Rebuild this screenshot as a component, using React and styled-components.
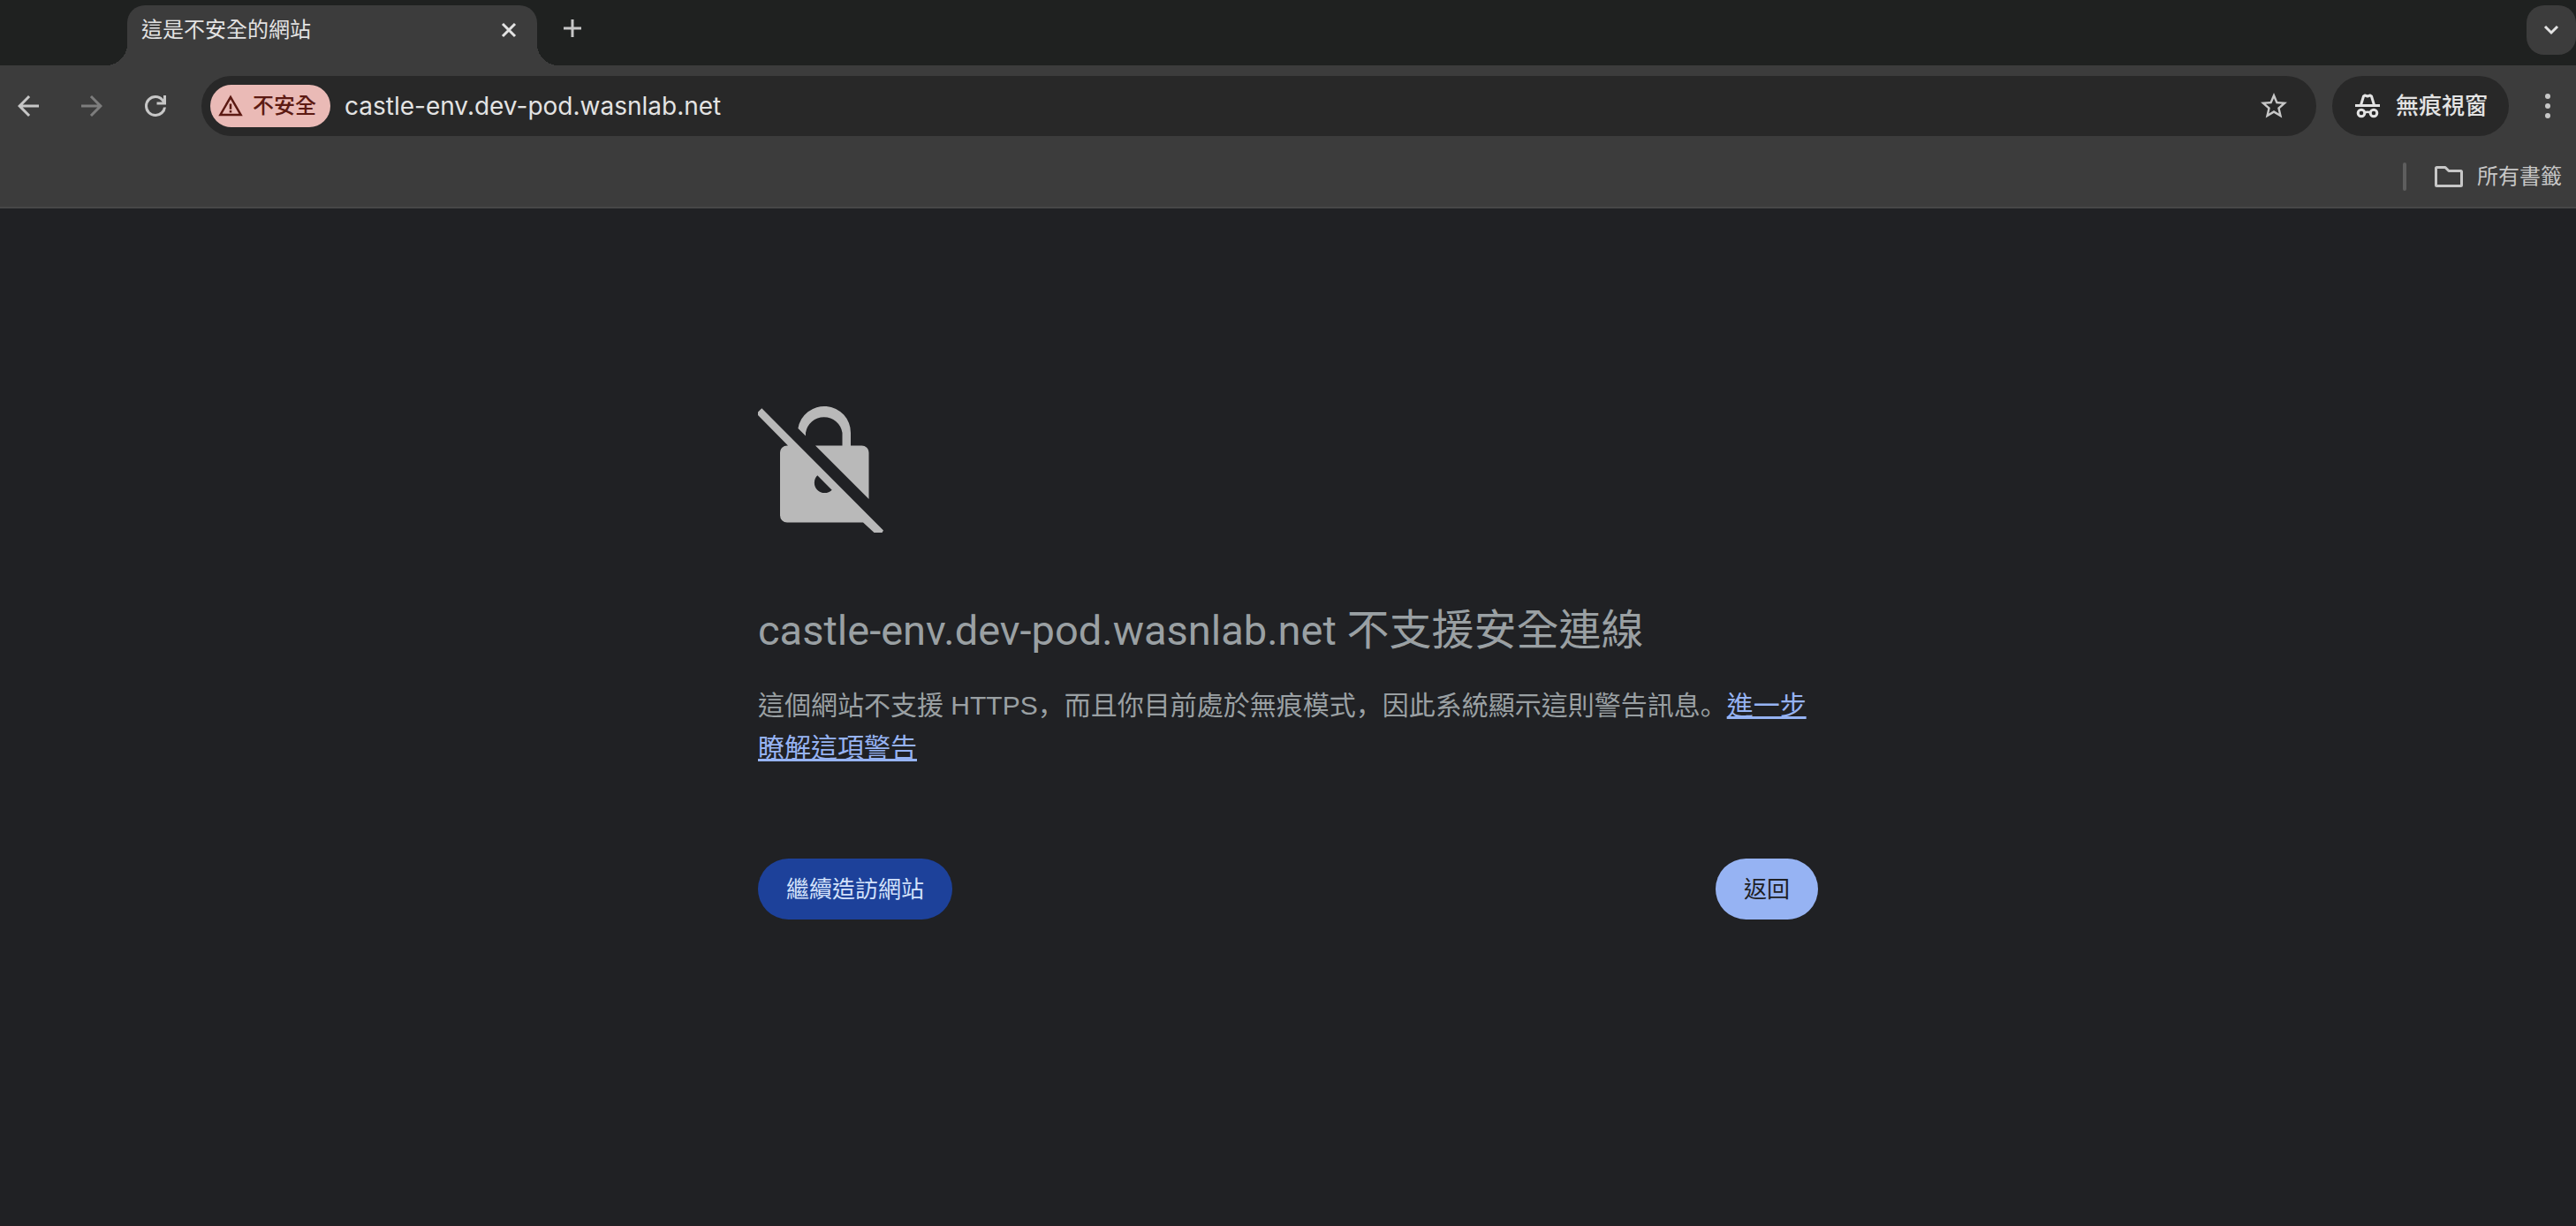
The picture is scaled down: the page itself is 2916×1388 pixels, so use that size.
import React from "react";
import styled, { createGlobalStyle, css } from "styled-components";

const sans = `Inter, "Noto Sans CJK TC", sans-serif`;

const GlobalStyle = createGlobalStyle`
  *, *::before, *::after { box-sizing: border-box; }
  body {
    margin: 0;
    background: #202124;
    font-family: ${sans};
  }
  button, input { font: inherit; }
`;

const Window = styled.div`
  display: flex;
  flex-direction: column;
  min-height: 100vh;
  border-bottom: 1px solid #241f24;
`;

/* ---------- tab strip ---------- */

const TabStrip = styled.header`
  display: flex;
  align-items: flex-end;
  height: 74px;
  padding-left: 144px;
  background: #1f2120;
`;

const Tab = styled.div`
  position: relative;
  display: flex;
  align-items: center;
  justify-content: space-between;
  width: 464px;
  height: 68px;
  padding: 0 14px 12px 16px;
  border-radius: 20px 20px 0 0;
  background: #3c3c3c;
  color: #e3e3e3;

  &::before,
  &::after {
    content: "";
    position: absolute;
    bottom: 0;
    width: 24px;
    height: 24px;
  }
  &::before {
    right: 100%;
    background: radial-gradient(circle at 0 0, transparent 24px, #3c3c3c 24px);
  }
  &::after {
    left: 100%;
    background: radial-gradient(circle at 100% 0, transparent 24px, #3c3c3c 24px);
  }
`;

const TabTitle = styled.span`
  font-size: 24px;
  line-height: 36px;
`;

const IconButton = styled.button`
  display: flex;
  align-items: center;
  justify-content: center;
  flex: none;
  width: 36px;
  height: 36px;
  padding: 0;
  border: 0;
  background: none;
  color: ${(p) => p.$color || "#c7c7c7"};

  svg { display: block; }
`;

const NewTab = styled(IconButton)`
  align-self: center;
  margin: 0 auto 10px 22px;
`;

const TabSearch = styled(IconButton)`
  align-self: flex-start;
  width: 56px;
  height: 56px;
  margin-top: 6px;
  border-radius: 20px;
  background: #3c3c3c;
`;

/* ---------- toolbar ---------- */

const Chrome = styled.div`
  border-bottom: 2px solid #474747;
  background: #3c3c3c;
`;

const Toolbar = styled.nav`
  display: flex;
  align-items: center;
  padding: 12px 14px;
`;

const NavButtons = styled.div`
  display: flex;
  gap: 36px;
  margin-right: 34px;
`;

const Omnibox = styled.form`
  display: flex;
  flex: 1;
  align-items: center;
  height: 68px;
  padding: 0 30px 0 10px;
  border-radius: 34px;
  background: #282828;
`;

const SecurityChip = styled.button`
  display: flex;
  align-items: center;
  gap: 10px;
  height: 48px;
  padding: 0 16px 0 8px;
  border: 0;
  border-radius: 24px;
  background: #eabab6;
  color: #5c1a13;
  font-size: 24px;
  font-weight: 500;
  line-height: 36px;
`;

const Address = styled.input`
  flex: 1;
  min-width: 0;
  padding: 0 16px;
  border: 0;
  outline: 0;
  background: none;
  color: #e3e3e3;
  font-size: 28px;
  line-height: 36px;
`;

const Incognito = styled.button`
  display: flex;
  align-items: center;
  gap: 18px;
  height: 68px;
  margin: 0 26px 0 18px;
  padding: 0 24px 0 26px;
  border: 0;
  border-radius: 34px;
  background: #282828;
  color: #e3e3e3;
  font-size: 26px;
  font-weight: 500;
  line-height: 36px;
`;

const BookmarksBar = styled.div`
  display: flex;
  align-items: center;
  justify-content: flex-end;
  height: 68px;
  padding-right: 16px;
`;

const Divider = styled.span`
  width: 4px;
  height: 32px;
  margin-right: 32px;
  border-radius: 2px;
  background: #5e5e5e;
`;

const AllBookmarks = styled.button`
  display: flex;
  align-items: center;
  gap: 16px;
  padding: 0;
  border: 0;
  background: none;
  color: #c7c7c7;
  font-size: 24px;
  line-height: 36px;
`;

/* ---------- warning page ---------- */

const Page = styled.main`
  width: 100%;
  max-width: 1200px;
  margin: 0 auto;
  padding-top: 223px;
  color: #9aa0a3;

  > svg { display: block; }
`;

const Title = styled.h1`
  margin: 73px 0 20px;
  font-family: Roboto, "Noto Sans CJK TC", sans-serif;
  font-size: 48px;
  font-weight: 400;
  line-height: 76px;
`;

const Host = styled.span`
  font-size: 47px;
`;

const Message = styled.p`
  margin: 0;
  font-family: "Liberation Sans", "Noto Sans CJK TC", sans-serif;
  font-size: 30px;
  line-height: 48px;
`;

const Punctuation = styled.span`
  font-family: "Noto Sans CJK SC", sans-serif;
`;

const LearnMore = styled.a`
  color: #96b3f3;
  text-decoration: underline;
`;

const Actions = styled.div`
  display: flex;
  justify-content: space-between;
  margin-top: 101px;
`;

const ActionButton = styled.button`
  height: 69px;
  padding: 0 32px;
  border: 0;
  border-radius: 35px;
  font-size: 26px;
  line-height: 36px;
  ${(p) =>
    p.$primary
      ? css`
          background: #96b3f3;
          color: #202124;
        `
      : css`
          background: #1d419a;
          color: #d3e2fb;
        `}
`;

/* ---------- icons ---------- */

const Glyph = ({ size = 36, d }) => (
  <svg width={size} height={size} viewBox="0 0 24 24" fill="currentColor" aria-hidden="true">
    <path d={d} />
  </svg>
);

const paths = {
  back: "M20 11H7.83l5.59-5.59L12 4l-8 8 8 8 1.41-1.41L7.83 13H20v-2z",
  forward: "M12 4l-1.41 1.41L16.17 11H4v2h12.17l-5.58 5.59L12 20l8-8z",
  reload:
    "M12 20q-3.35 0-5.675-2.325T4 12t2.325-5.675T12 4q1.725 0 3.3.712T18 6.75V4h2v7h-7V9h4.2q-.8-1.4-2.187-2.2T12 6Q9.5 6 7.75 7.75T6 12t1.75 4.25T12 18q2.400 0 4.100-1.600T18 13h2q-.3 2.900-2.600 5T12 20",
  star:
    "M22 9.24l-7.19-.62L12 2 9.19 8.63 2 9.24l5.46 4.73L5.82 21 12 17.27 18.18 21l-1.63-7.03L22 9.24zM12 15.4l-3.76 2.27 1-4.28-3.32-2.88 4.38-.38L12 6.1l1.71 4.04 4.38.38-3.32 2.88 1 4.28L12 15.4z",
  warning:
    "M1 21 12 2l11 19H1zm3.45-2h15.1L12 6 4.45 19zM11 18h2v-2h-2v2zm0-3h2v-5h-2v5z",
};

const Close = () => (
  <svg width="18" height="18" viewBox="0 0 18 18" fill="none" stroke="currentColor" strokeWidth="3">
    <path d="M2 2l14 14M16 2L2 16" />
  </svg>
);

const Plus = () => (
  <svg width="22" height="22" viewBox="0 0 22 22" fill="none" stroke="currentColor" strokeWidth="3">
    <path d="M11 1v20M1 11h20" />
  </svg>
);

const Chevron = () => (
  <svg width="18" height="12" viewBox="0 0 18 12" fill="none" stroke="currentColor" strokeWidth="3">
    <path d="M2 2l7 7 7-7" />
  </svg>
);

const Dots = () => (
  <svg width="6" height="28" viewBox="0 0 6 28" fill="currentColor">
    <circle cx="3" cy="3" r="3" />
    <circle cx="3" cy="14" r="3" />
    <circle cx="3" cy="25" r="3" />
  </svg>
);

const Folder = () => (
  <svg width="32" height="24" viewBox="0 0 32 24" fill="none" stroke="currentColor" strokeWidth="3" strokeLinejoin="round">
    <path d="M1.5 2.5q0-1 1-1H12l4 4h13.500q1 0 1 1v15q0 1-1 1h-27q-1 0-1-1z" />
  </svg>
);

const Hat = () => (
  <svg width="28" height="28" viewBox="0 0 28 28" fill="none" stroke="currentColor" strokeWidth="3">
    <path d="M0 13.500h28" />
    <path d="M6.500 13L9.500 3l1.500-1 3 1 3-1 1.500 1 3 10" strokeLinejoin="round" />
    <circle cx="7" cy="22" r="3.800" />
    <circle cx="21" cy="22" r="3.800" />
    <path d="M10.500 21.500q3.500-1.500 7 0" strokeWidth="2.500" />
  </svg>
);

const InsecureLock = () => (
  <svg width="144" height="144" viewBox="0 0 144 144" fill="#b9b9b9" role="img" aria-label="不安全">
    <path d="M4.300 3.300L0 7.500V11l34 34.500h-1a8 8 0 0 0-8 8v71a8 8 0 0 0 8 8h86L131.500 144h9l1.500-2.500zM67.300 79.200l16.400 16.500A11.500 11.500 0 0 1 67.300 79.200z" fillRule="evenodd" />
    <path d="M65 45.500L125.500 106V53.500a8 8 0 0 0-8-8H105V31a30 30 0 0 0-59.600-5l8.600 8.500V31a21 21 0 0 1 41.500 0v14.500z" />
  </svg>
);

export default function App() {
  return (
    <Window>
      <GlobalStyle />
      <TabStrip>
        <Tab>
          <TabTitle>這是不安全的網站</TabTitle>
          <IconButton type="button" aria-label="關閉分頁" $color="#e3e3e3"><Close /></IconButton>
        </Tab>
        <NewTab type="button" aria-label="新增分頁"><Plus /></NewTab>
        <TabSearch type="button" aria-label="搜尋分頁" $color="#e3e3e3"><Chevron /></TabSearch>
      </TabStrip>

      <Chrome>
        <Toolbar>
          <NavButtons>
            <IconButton type="button" aria-label="上一頁"><Glyph d={paths.back} /></IconButton>
            <IconButton type="button" aria-label="下一頁" $color="#7d7d7d"><Glyph d={paths.forward} /></IconButton>
            <IconButton type="button" aria-label="重新載入"><Glyph d={paths.reload} /></IconButton>
          </NavButtons>
          <Omnibox onSubmit={(e) => e.preventDefault()}>
            <SecurityChip type="button"><Glyph size={30} d={paths.warning} />不安全</SecurityChip>
            <Address type="text" aria-label="網址列" defaultValue="castle-env.dev-pod.wasnlab.net" />
            <IconButton type="button" aria-label="加入書籤"><Glyph d={paths.star} /></IconButton>
          </Omnibox>
          <Incognito type="button"><Hat />無痕視窗</Incognito>
          <IconButton type="button" aria-label="更多"><Dots /></IconButton>
        </Toolbar>
        <BookmarksBar>
          <Divider />
          <AllBookmarks type="button"><Folder />所有書籤</AllBookmarks>
        </BookmarksBar>
      </Chrome>

      <Page>
        <InsecureLock />
        <Title><Host>castle-env.dev-pod.wasnlab.net </Host>不支援安全連線</Title>
        <Message>
          這個網站不支援 HTTPS<Punctuation>，</Punctuation>而且你目前處於無痕模式<Punctuation>，</Punctuation>因此系統顯示這則警告訊息<Punctuation>。</Punctuation><LearnMore href="#learn-more">進一步瞭解這項警告</LearnMore>
        </Message>
        <Actions>
          <ActionButton type="button">繼續造訪網站</ActionButton>
          <ActionButton type="button" $primary>返回</ActionButton>
        </Actions>
      </Page>
    </Window>
  );
}
